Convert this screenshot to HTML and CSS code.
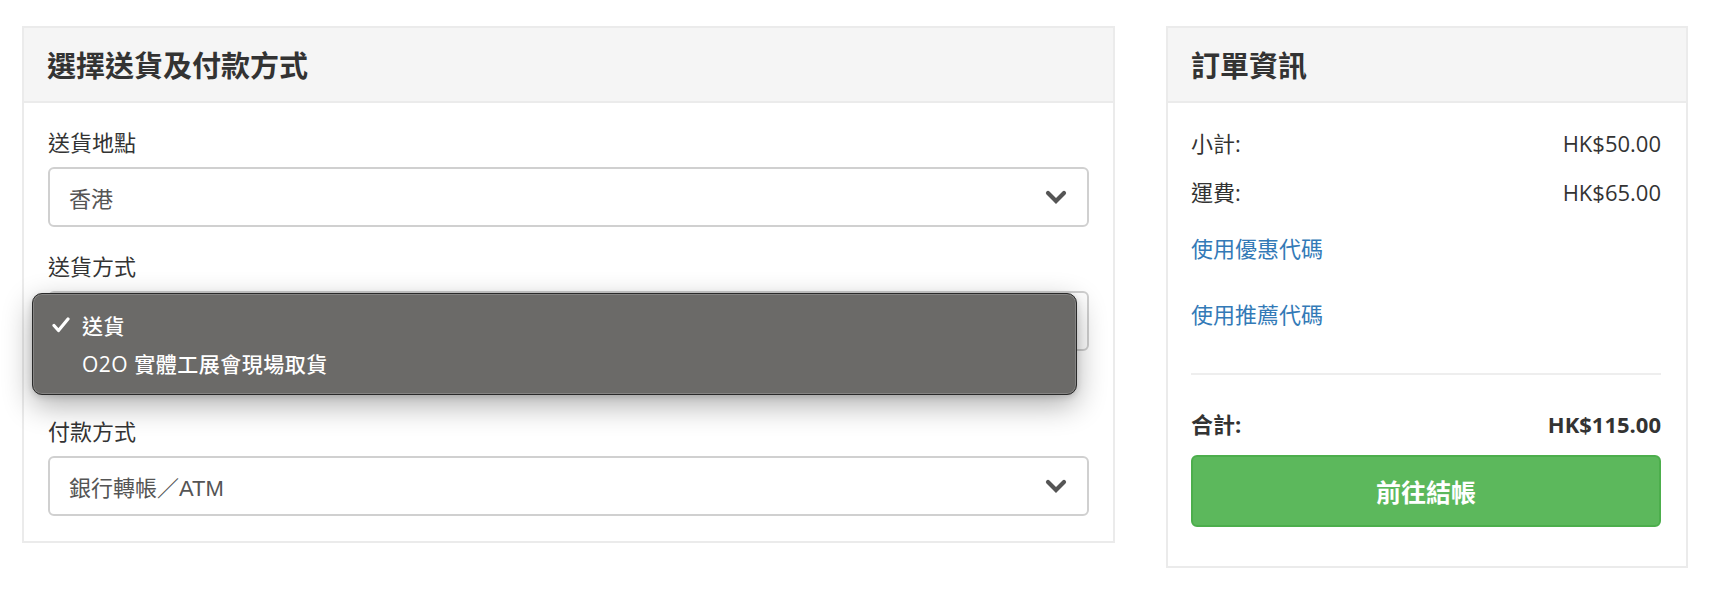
FILE: index.html
```html
<!DOCTYPE html>
<html lang="zh-Hant">
<head>
<meta charset="utf-8">
<title>選擇送貨及付款方式</title>
<link rel="stylesheet" href="styles.css">
</head>
<body>
<div class="page">
  <section class="panel panel-form">
    <div class="panel-heading"><h3 class="panel-title">選擇送貨及付款方式</h3></div>
    <div class="panel-body">
      <div class="form-group">
        <label class="form-label">送貨地點</label>
        <div class="select">
          <span class="select-value">香港</span>
          <svg class="chevron" viewBox="0 0 22 14" width="22" height="14"><polyline points="3,3 11,11 19,3"/></svg>
        </div>
      </div>
      <div class="form-group form-group-open">
        <label class="form-label">送貨方式</label>
        <div class="select-wrap">
          <div class="select select-open">
            <span class="select-value">送貨</span>
            <svg class="chevron" viewBox="0 0 22 14" width="22" height="14"><polyline points="3,3 11,11 19,3"/></svg>
          </div>
          <ul class="dropdown">
            <li class="dropdown-item"><span class="check-slot"><svg class="check" viewBox="0 0 18 16" width="18" height="16"><polyline points="2,8.5 6.5,13.5 16,2"/></svg></span>送貨</li>
            <li class="dropdown-item"><span class="check-slot"></span>O2O 實體工展會現場取貨</li>
          </ul>
        </div>
      </div>
      <div class="form-group form-group-last">
        <label class="form-label">付款方式</label>
        <div class="select">
          <span class="select-value">銀行轉帳／ATM</span>
          <svg class="chevron" viewBox="0 0 22 14" width="22" height="14"><polyline points="3,3 11,11 19,3"/></svg>
        </div>
      </div>
    </div>
  </section>

  <aside class="panel panel-summary">
    <div class="panel-heading"><h3 class="panel-title">訂單資訊</h3></div>
    <div class="panel-body summary-body">
      <div class="summary-row row-subtotal"><span>小計:</span><span>HK$50.00</span></div>
      <div class="summary-row row-shipping"><span>運費:</span><span>HK$65.00</span></div>
      <a class="summary-link link-coupon" href="#">使用優惠代碼</a>
      <a class="summary-link link-referral" href="#">使用推薦代碼</a>
      <hr class="summary-divider">
      <div class="summary-row row-total"><span>合計:</span><span>HK$115.00</span></div>
      <button class="btn-checkout" type="button">前往結帳</button>
    </div>
  </aside>
</div>
</body>
</html>
```

FILE: styles.css
```css
* { box-sizing: border-box; }

html, body {
  margin: 0;
  padding: 0;
  background: #ffffff;
}

body {
  font-family: "Open Sans", "Noto Sans CJK TC", sans-serif;
  font-size: 22px;
  color: #333333;
}

.page {
  display: grid;
  grid-template-columns: 1093px 522px;
  column-gap: 51px;
  align-items: start;
  padding: 26px 28px 0 22px;
}

.panel {
  border: 2px solid #ebebeb;
  background: #ffffff;
}

.panel-heading {
  background: #f5f5f5;
  border-bottom: 2px solid #ebebeb;
  padding: 21px 23px 19px;
}

.panel-title {
  margin: 0;
  font-size: 29px;
  line-height: 33px;
  font-weight: 600;
  color: #333333;
}

/* ---------- form panel ---------- */
.panel-form .panel-body {
  padding: 24px 24px 25px 24px;
}

.form-group {
  margin-bottom: 24px;
}

.form-group-open {
  margin-bottom: 65px;
}

.form-group-last {
  margin-bottom: 0;
}

.form-label {
  display: block;
  font-size: 22px;
  line-height: 30px;
  margin-bottom: 10px;
  color: #333333;
}

.select {
  height: 60px;
  border: 2px solid #d0d0d0;
  border-radius: 6px;
  background: #ffffff;
  display: flex;
  align-items: center;
  justify-content: space-between;
  padding: 0 20px 0 19px;
}

.select-value {
  font-family: "Liberation Sans", "Noto Sans CJK TC", sans-serif;
  font-size: 22px;
  color: #555555;
}

.select-open .select-value {
  visibility: hidden;
}

.chevron {
  display: block;
  fill: none;
  stroke: #555555;
  stroke-width: 4.2;
  stroke-linecap: round;
  stroke-linejoin: miter;
}

.select-wrap {
  position: relative;
}

.dropdown {
  position: absolute;
  left: -16px;
  top: 2px;
  width: 1045px;
  margin: 0;
  padding: 12px 0 12px;
  list-style: none;
  background: #6b6a68;
  border: 1px solid #2a2a2a;
  border-radius: 10px;
  box-shadow: inset 0 0 0 1px rgba(255, 255, 255, 0.18),
              0 10px 30px rgba(0, 0, 0, 0.32),
              0 2px 6px rgba(0, 0, 0, 0.15);
  z-index: 10;
}

.dropdown-item {
  display: flex;
  align-items: center;
  height: 38px;
  padding-left: 19px;
  font-size: 21px;
  font-weight: 500;
  color: #ffffff;
  letter-spacing: 0.5px;
}

.check-slot {
  width: 30px;
  flex: none;
  display: flex;
  align-items: center;
}

.check {
  display: block;
  fill: none;
  stroke: #ffffff;
  stroke-width: 3.2;
  stroke-linecap: round;
  stroke-linejoin: round;
}

/* ---------- summary panel ---------- */
.summary-body {
  padding: 25px 25px 39px 23px;
}

.summary-row {
  display: flex;
  justify-content: space-between;
  line-height: 30px;
  font-size: 22px;
  color: #333333;
}

.row-subtotal { margin-bottom: 19px; }
.row-shipping { margin-bottom: 26px; }

.summary-link {
  display: block;
  font-size: 22px;
  line-height: 30px;
  color: #337ab7;
  text-decoration: none;
}

.link-coupon { margin-bottom: 36px; }
.link-referral { margin-bottom: 44px; }

.summary-divider {
  margin: 0 0 34px;
  border: 0;
  border-top: 2px solid #eeeeee;
  height: 0;
}

.row-total {
  font-weight: 700;
  margin-bottom: 16px;
}

.btn-checkout {
  display: block;
  width: 100%;
  height: 72px;
  margin: 0;
  border: 2px solid #4cae4c;
  border-radius: 6px;
  background: #5cb85c;
  color: #ffffff;
  font-family: "Open Sans", "Noto Sans CJK TC", sans-serif;
  font-size: 25px;
  font-weight: 700;
  cursor: pointer;
}
```
